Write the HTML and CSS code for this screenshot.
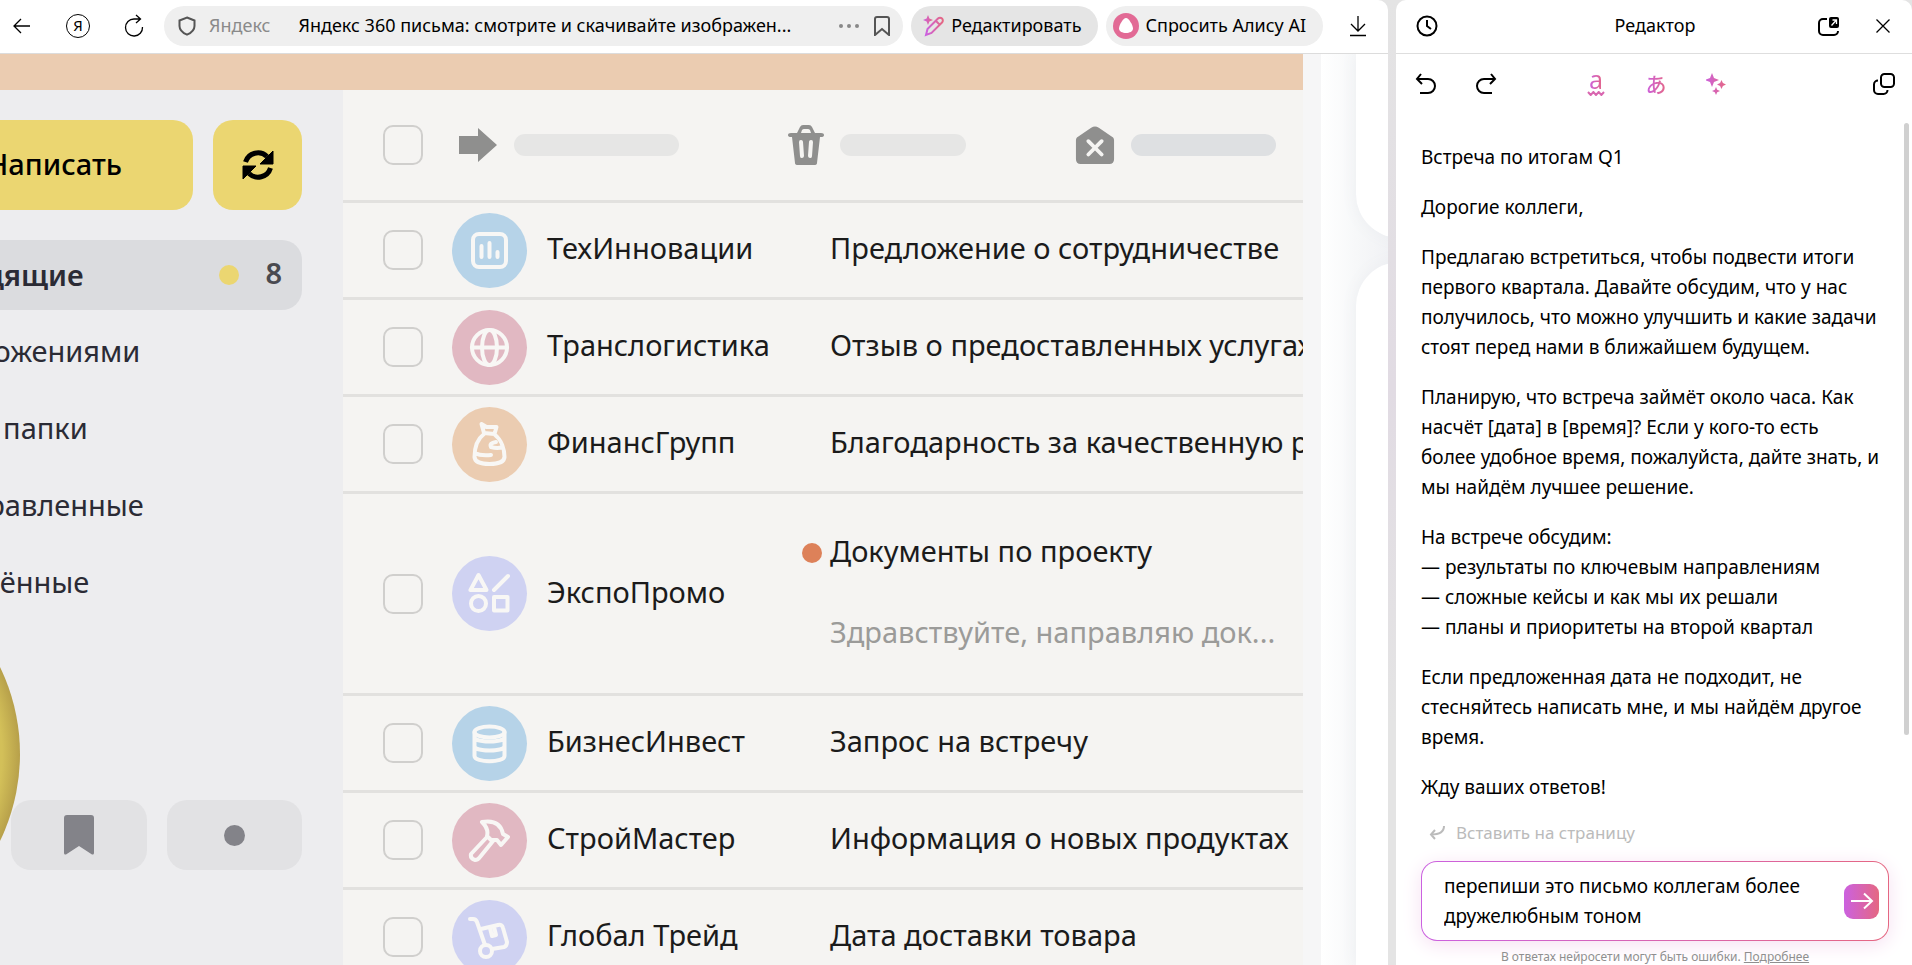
FILE: index.html
```html
<!DOCTYPE html>
<html lang="ru">
<head>
    <meta charset="UTF-8">
    <title>Яндекс 360 письма: смотрите и скачивайте изображения</title>
    <link rel="stylesheet" href="styles.css">
</head>
<body>
    <div class="ventana">
    <header class="barra">
        <button class="icono" aria-label="Назад">
            <svg width="20" height="20" viewBox="0 0 20 20"><path d="M18 10H2M9 3L2 10l7 7"/></svg>
        </button>
        <button class="icono" aria-label="Яндекс">
            <span class="ya">Я</span>
        </button>
        <button class="icono" aria-label="Обновить">
            <svg width="20" height="24" viewBox="0 0 20 24"><path d="M16 5H10A8.500 8.500 0 1 0 18.500 13M12 1l4.500 4L12 9"/></svg>
        </button>
        <div class="direccion">
            <svg class="gris" width="18" height="20" viewBox="0 0 18 20"><path d="M9 1.500L16.500 4.500V10c0 4-3.500 7-7.500 8.700C5 17 1.500 14 1.500 10V4.500z"/></svg>
            <span class="sitio">Яндекс</span>
            <span class="titulo">Яндекс 360 письма: смотрите и скачивайте изображен...</span>
            <button class="puntos" aria-label="Ещё"><i></i><i></i><i></i></button>
            <button class="mini" aria-label="Закладка">
                <svg class="gris" width="18" height="20" viewBox="0 0 18 20"><path d="M2 3a2 2 0 0 1 2-2h10a2 2 0 0 1 2 2v16l-7-6-7 6z"/></svg>
            </button>
        </div>
        <button class="pildora editar">
            <svg width="22" height="22" viewBox="0 0 22 22"><g class="rosa"><path d="M3 20l1.500-6L15 3.500a2.800 2.800 0 0 1 4 4L8.500 18z M13 6l3.500 3.500"/></g><path class="rosaLleno" d="M5 0l1.400 3.600L10 5 6.400 6.400 5 10 3.600 6.400 0 5l3.600-1.400z"/></svg>
            <span>Редактировать</span>
        </button>
        <button class="pildora alisa">
            <svg width="26" height="26" viewBox="0 0 26 26"><circle cx="13" cy="13" r="13" fill="#e26a95" stroke="none"/><path d="M13 5c3 0 7 7.500 7 10.500S16.500 20 13 20s-7-1.500-7-4.500S10 5 13 5z" fill="#fff" stroke="none"/></svg>
            <span>Спросить Алису AI</span>
        </button>
        <button class="icono bajar" aria-label="Загрузки">
            <svg width="18" height="22" viewBox="0 0 18 22"><path d="M9 1v15M2 9l7 7 7-7M1 20.500h16"/></svg>
        </button>
    </header>

    <main class="pagina">
        <div class="correo">
            <div class="franja"></div>
            <nav class="carpetas">
                <div class="arriba">
                    <button class="escribir">Написать</button>
                    <button class="refrescar" aria-label="Проверить почту">
                        <svg width="32" height="32" viewBox="0 0 32 32"><path d="M3.500 13A13 13 0 0 1 25 7.500M28.500 19A13 13 0 0 1 7 24.500" fill="none" stroke="#000" stroke-width="5"/><path d="M31 2v13H18zM1 30V17h13z" fill="#000" stroke="#000" stroke-width="1"/></svg>
                    </button>
                </div>
                <a href="#" class="activa">Входящие <span class="nuevo"></span><b>8</b></a>
                <a href="#">С вложениями</a>
                <a href="#">Мои папки</a>
                <a href="#">Отправленные</a>
                <a href="#">Удалённые</a>
                <div class="abajo">
                    <button aria-label="Закладки">
                        <svg width="30" height="40" viewBox="0 0 30 40"><path d="M0 3a3 3 0 0 1 3-3h24a3 3 0 0 1 3 3v35q0 2-2 1.500L15 31 2 39.500Q0 40 0 38z" fill="#838389" stroke="none"/></svg>
                    </button>
                    <button aria-label="Непрочитанные"><span class="punto"></span></button>
                </div>
                <div class="moneda"></div>
            </nav>

            <section class="lista">
                <div class="acciones">
                    <input type="checkbox" aria-label="Выбрать все">
                    <div class="accion">
                        <svg width="40" height="36" viewBox="0 0 40 36"><path d="M1 9h19V1l19 17-19 17v-8H1z" fill="#8f8f8e" stroke="none"/></svg>
                        <span class="largo"></span>
                    </div>
                    <div class="accion">
                        <svg width="36" height="40" viewBox="0 0 36 40"><path d="M9 8l3-6q1-2 3-2h6q2 0 3 2l3 6h6q3 0 3 2t-3 2h-1l-3 26q0 2-3 2H10q-3 0-3-2L4 12H3q-3 0-3-2t3-2zM13 8h10l-1-3q-1-1-2-1h-4q-1 0-2 1z" fill="#8f8f8e" fill-rule="evenodd" stroke="none"/><path d="M13 17l1 14M23 17l-1 14" stroke="#f5f4f2" stroke-width="4" stroke-linecap="round"/></svg>
                        <span></span>
                    </div>
                    <div class="accion">
                        <svg width="40" height="40" viewBox="0 0 42 40"><path d="M17 2q4-3 8 0l15 10q1 1 1 3v20q0 5-5 5H6q-5 0-5-5V15q0-2 1-3z" fill="#8f8f8e" stroke="none"/><path d="M14 16l14 14M28 16L14 30" stroke="#f5f4f2" stroke-width="4" stroke-linecap="round"/></svg>
                        <span class="oscuro"></span>
                    </div>
                </div>
                <ul>
                    <li>
                        <input type="checkbox" aria-label="ТехИнновации">
                        <span class="avatar azul"><svg width="75" height="75" viewBox="0 0 75 75"><rect x="21" y="21" width="33" height="33" rx="6"/><path d="M29.500 33v11M37.500 30v14M45.500 39v5"/></svg></span>
                        <span class="nombre">ТехИнновации</span>
                        <span class="asunto">Предложение о сотрудничестве</span>
                    </li>
                    <li>
                        <input type="checkbox" aria-label="Транслогистика">
                        <span class="avatar rojo"><svg width="75" height="75" viewBox="0 0 75 75"><circle cx="37.500" cy="37.500" r="17.500"/><ellipse cx="37.500" cy="37.500" rx="7.500" ry="17.500"/><path d="M20 37.500h35"/></svg></span>
                        <span class="nombre">Транслогистика</span>
                        <span class="asunto">Отзыв о предоставленных услугах</span>
                    </li>
                    <li>
                        <input type="checkbox" aria-label="ФинансГрупп">
                        <span class="avatar naranja"><svg width="75" height="75" viewBox="0 0 75 75"><path d="M32 26l-2.500-9 5 3 10 0-2 7zM32 27C24 33 22.500 43 22.500 50Q23 57 37.500 57T52.500 50C52.500 43 50 33 42 27M50 40Q46 42 39 40 37 36 44 35M23 46Q28 49 39 48"/></svg></span>
                        <span class="nombre">ФинансГрупп</span>
                        <span class="asunto">Благодарность за качественную работу</span>
                    </li>
                    <li class="alta">
                        <input type="checkbox" aria-label="ЭкспоПромо">
                        <span class="avatar lila"><svg width="75" height="75" viewBox="0 0 75 75"><path d="M26.500 19L18.500 34h16zM42 34L56 20M42 41h13.500v13.500H42z"/><circle cx="26.500" cy="47.500" r="7.500"/></svg></span>
                        <span class="nombre">ЭкспоПромо</span>
                        <span class="asunto">
                            <span class="conPunto">Документы по проекту</span>
                            <span class="resumen">Здравствуйте, направляю док...</span>
                        </span>
                    </li>
                    <li>
                        <input type="checkbox" aria-label="БизнесИнвест">
                        <span class="avatar azul"><svg width="75" height="75" viewBox="0 0 75 75"><ellipse cx="37.500" cy="26" rx="15" ry="5.500"/><path d="M22.500 26v24c0 7 30 7 30 0V26M22.500 31c0 6 30 6 30 0M22.500 40c0 6 30 6 30 0"/></svg></span>
                        <span class="nombre">БизнесИнвест</span>
                        <span class="asunto">Запрос на встречу</span>
                    </li>
                    <li>
                        <input type="checkbox" aria-label="СтройМастер">
                        <span class="avatar rojo"><svg width="75" height="75" viewBox="0 0 75 75"><path d="M30 19C42 17 49 21 51 31l5 3-7 8-4-5-6 0-4-4Q37 26 30 19zM35 34L19 51q-1 5 4 6 3 0 5-3L41 38"/></svg></span>
                        <span class="nombre">СтройМастер</span>
                        <span class="asunto">Информация о новых продуктах</span>
                    </li>
                    <li>
                        <input type="checkbox" aria-label="Глобал Трейд">
                        <span class="avatar lila"><svg width="75" height="75" viewBox="0 0 75 75"><path d="M18 19h3q3 0 4 3l8 23M29 29l17-4q4-1 5 3l4 14q0 4-3 5l-12 2M38 28l2 8 4-1-2-8"/><circle cx="34" cy="51" r="6"/></svg></span>
                        <span class="nombre">Глобал Трейд</span>
                        <span class="asunto">Дата доставки товара</span>
                    </li>
                </ul>
            </section>
        </div>
        <div class="borde"></div>
        <div class="tarjetas">
            <div class="tarjeta primera"></div>
            <div class="tarjeta segunda"></div>
        </div>
    </main>
    </div>

    <aside class="editor">
        <div class="cabecera">
            <button class="icono" aria-label="История">
                <svg width="22" height="22" viewBox="0 0 22 22"><g stroke-width="2"><circle cx="11" cy="11" r="9.500"/><path d="M11 5v6l4 3"/></g></svg>
            </button>
            <h1>Редактор</h1>
            <button class="icono" aria-label="Открыть в окне">
                <svg width="22" height="20" viewBox="0 0 22 20"><path stroke-width="2" d="M9 3H5a4 4 0 0 0-4 4v8a4 4 0 0 0 4 4h11a4 4 0 0 0 4-4"/><rect x="11" y="1" width="10" height="11" rx="2" fill="#000" stroke="none"/><path stroke="#fff" d="M13.500 9.500L18 4.500M14.500 4h4v4"/></svg>
            </button>
            <button class="icono cerrar" aria-label="Закрыть">
                <svg width="16" height="16" viewBox="0 0 16 16"><path d="M1.500 1.500l13 13M14.500 1.500l-13 13"/></svg>
            </button>
        </div>
        <div class="herramientas">
            <button class="icono" aria-label="Отменить">
                <svg width="22" height="22" viewBox="0 0 22 22"><path stroke-width="2" d="M6 1L2 6l5 5M2 6h11a7 7 0 0 1 0 14H5"/></svg>
            </button>
            <button class="icono" aria-label="Повторить">
                <svg width="22" height="22" viewBox="0 0 22 22"><path stroke-width="2" d="M16 1l4 5-5 5M20 6H9a7 7 0 0 0 0 14h8"/></svg>
            </button>
            <div class="centro">
                <button class="icono columna" aria-label="Исправить ошибки">
                    <span class="letra">a</span>
                    <svg width="18" height="5" viewBox="0 0 18 5"><path stroke="#d967b0" stroke-width="2" d="M1 1l2.700 3 2.700-3L9 4l2.700-3 2.700 3L17 1"/></svg>
                </button>
                <button class="icono" aria-label="Перевести">
                    <span class="letra jp">あ</span>
                </button>
                <button class="icono" aria-label="Улучшить">
                    <svg width="20" height="22" viewBox="0 0 20 22"><path class="rosaLleno" d="M6 0l2 5 5 2-5 2-2 5-2-5-5-2 5-2zM15.500 7l1.400 3.100L20 11.500l-3.100 1.400-1.400 3.100-1.400-3.100-3.100-1.400 3.100-1.400zM10 14l1.200 2.800L14 18l-2.800 1.200L10 22l-1.200-2.800L6 18l2.800-1.200z"/></svg>
                </button>
            </div>
            <button class="icono" aria-label="Копировать">
                <svg width="22" height="22" viewBox="0 0 22 22"><g stroke-width="2"><rect x="8" y="1" width="13" height="13" rx="3.500"/><path d="M5 7.500a4 4 0 0 0-4 4V17a4 4 0 0 0 4 4h5.500a4 4 0 0 0 4-4"/></g></svg>
            </button>
        </div>
        <div class="texto">
            <p>Встреча по итогам Q1</p>
            <p>Дорогие коллеги,</p>
            <p>Предлагаю встретиться, чтобы подвести итоги первого квартала. Давайте обсудим, что у нас получилось, что можно улучшить и какие задачи стоят перед нами в ближайшем будущем.</p>
            <p>Планирую, что встреча займёт около часа. Как насчёт [дата] в [время]? Если у кого-то есть<br>более удобное время, пожалуйста, дайте знать, и мы найдём лучшее решение.</p>
            <p>На встрече обсудим:<br>— результаты по ключевым направлениям<br>— сложные кейсы и как мы их решали<br>— планы и приоритеты на второй квартал</p>
            <p>Если предложенная дата не подходит, не стесняйтесь написать мне, и мы найдём другое время.</p>
            <p>Жду ваших ответов!</p>
            <span class="scroll"></span>
        </div>
        <button class="insertar" disabled>
            <svg width="16" height="16" viewBox="0 0 16 16"><path stroke="#bbb" stroke-width="2" d="M15 1c0 6-4 8.500-13 8.500M6 5L2 9.500 6 14"/></svg>
            Вставить на страницу
        </button>
        <form class="pedido">
            <textarea rows="2" aria-label="Запрос">перепиши это письмо коллегам более дружелюбным тоном</textarea>
            <button type="button" aria-label="Отправить">
                <svg width="24" height="18" viewBox="0 0 24 18"><path stroke="#fff" stroke-width="2" d="M1 9h21M14 1.500L22 9l-8 7.500"/></svg>
            </button>
        </form>
        <p class="aviso">В ответах нейросети могут быть ошибки. <a href="#">Подробнее</a></p>
    </aside>

    <svg width="0" height="0" class="defs"><defs><linearGradient id="rosa"><stop offset="0" stop-color="#cb61e0"/><stop offset="1" stop-color="#e56782"/></linearGradient></defs></svg>
</body>
</html>
```
FILE: styles.css
```css
* {
    box-sizing: border-box;
}

body {
    margin: 0;
    height: 100vh;
    overflow: hidden;
    display: grid;
    grid-template-columns: 1fr 516px;
    gap: 8px;
    background: linear-gradient(#e4e4e4, #e1dbe3 40%, #e4e4e4 75%);
    font-family: "Noto Sans", "Noto Sans CJK JP", sans-serif;
    color: #000;
}

button {
    border: none;
    background: none;
    padding: 0;
    font-family: inherit;
    color: inherit;
    cursor: pointer;
}

svg {
    fill: none;
    stroke: #000;
    stroke-width: 1.3;
    flex-shrink: 0;
}

p, h1, ul {
    margin: 0;
    padding: 0;
}

.defs {
    position: absolute;
}

.rosa {
    stroke: url(#rosa);
    stroke-width: 2;
}

.rosaLleno {
    fill: url(#rosa);
    stroke: none;
}

.gris {
    stroke: #555;
    stroke-width: 2;
}

.icono {
    width: 32px;
    height: 32px;
    display: flex;
    align-items: center;
    justify-content: center;
    flex-shrink: 0;
}

/* ventana del navegador */
.ventana {
    min-width: 0;
    display: flex;
    flex-direction: column;
    background: #fff;
    border-radius: 0 10px 0 0;
    overflow: hidden;
    height: 100vh;
}

.barra {
    display: flex;
    align-items: center;
    height: 54px;
    padding: 0 14px 1px 6px;
    flex-shrink: 0;
    border-bottom: 1px solid #dcdcdc;
}

.barra > .icono {
    margin-right: 24px;
}

.barra > .icono + .direccion {
    margin-left: -10px;
}

.ya {
    width: 24px;
    height: 24px;
    border: 1px solid #000;
    border-radius: 50%;
    font-size: 15px;
    line-height: 21px;
}

.direccion {
    flex: 1;
    min-width: 0;
    height: 40px;
    border-radius: 20px;
    background: #efefef;
    display: flex;
    align-items: center;
    padding: 0 12px 0 14px;
    font-size: 18px;
    white-space: nowrap;
}

.sitio {
    color: #8a8a8a;
    margin: 0 28px 0 13px;
    padding-bottom: 2px;
}

.titulo {
    flex: 1;
    overflow: hidden;
    padding-bottom: 2px;
}

.puntos {
    display: flex;
    gap: 4px;
    margin-right: 14px;
}

.puntos i {
    width: 4px;
    height: 4px;
    border-radius: 50%;
    background: #888;
}

.mini {
    display: flex;
}

.pildora {
    height: 40px;
    border-radius: 20px;
    margin-left: 8px;
    background: #efefef;
    display: flex;
    align-items: center;
    gap: 6px;
    font-size: 18px;
    white-space: nowrap;
}

.pildora span {
    padding-bottom: 2px;
}

.editar {
    background: #e5e5e5;
    padding: 0 17px 0 12px;
}

.alisa {
    padding: 0 17px 0 7px;
}

.barra > .bajar {
    margin: 0 0 0 19px;
}

/* correo */
.pagina {
    flex: 1;
    min-height: 0;
    display: grid;
    grid-template-columns: 1fr 18px 67px;
}

.correo {
    min-width: 0;
    min-height: 0;
    overflow: hidden;
    display: grid;
    grid-template-columns: 343px 1fr;
    grid-template-rows: 36px 1fr;
    background: #f5f4f2;
}

.franja {
    grid-column: 1 / 3;
    background: #ebccb1;
}

.carpetas {
    position: relative;
    overflow: hidden;
    min-height: 0;
    background: #ededef;
    padding: 30px 41px 0 0;
    display: flex;
    flex-direction: column;
}

.arriba {
    display: flex;
    gap: 20px;
    margin: 0 0 30px -61px;
}

.escribir {
    flex: 1;
    height: 90px;
    border-radius: 20px;
    background: #ebd671;
    font-size: 29px;
    font-weight: 500;
    text-align: right;
    padding: 0 71px 4px 0;
}

.refrescar {
    width: 89px;
    height: 90px;
    border-radius: 20px;
    background: #ebd671;
    display: flex;
    align-items: center;
    justify-content: center;
    flex-shrink: 0;
}

.carpetas a {
    height: 77px;
    line-height: 73px;
    margin-left: -66px;
    font-size: 29px;
    color: #2b2b35;
    text-decoration: none;
    white-space: nowrap;
}

.carpetas .activa {
    display: flex;
    align-items: center;
    height: 70px;
    line-height: 66px;
    margin: 0 0 4px -86px;
    padding: 0 20px;
    border-radius: 20px;
    background: #dbdcdf;
    font-weight: 600;
}

.nuevo {
    width: 20px;
    height: 20px;
    border-radius: 50%;
    background: #ebd671;
    margin: 0 26px 0 auto;
}

.activa b {
    height: 70px;
    font-weight: 600;
    color: #4a4a50;
}

.abajo {
    display: flex;
    gap: 20px;
    margin: 178px 0 0 11px;
}

.abajo button {
    flex: 1;
    height: 70px;
    border-radius: 20px;
    background: #e2e2e4;
    display: flex;
    align-items: center;
    justify-content: center;
}

.punto {
    width: 21px;
    height: 21px;
    border-radius: 50%;
    background: #838389;
}

.moneda {
    position: absolute;
    left: -378px;
    top: 465px;
    width: 398px;
    height: 398px;
    border-radius: 50%;
    background: radial-gradient(closest-side, #d3c059 91%, #b7a04a 100%);
}

.lista {
    min-width: 0;
    min-height: 0;
    overflow: hidden;
}

.lista input {
    appearance: none;
    width: 40px;
    height: 40px;
    margin: 0;
    border: 2px solid #d0cfcd;
    border-radius: 10px;
    flex-shrink: 0;
}

.acciones {
    display: flex;
    align-items: center;
    height: 110px;
    padding-left: 40px;
}

.accion {
    display: flex;
    align-items: center;
    gap: 16px;
    margin-left: 35px;
}

.accion + .accion {
    margin-left: 109px;
}

.accion span {
    width: 126px;
    height: 22px;
    border-radius: 11px;
    background: #e6e6e5;
}

.accion .largo {
    width: 165px;
}

.accion .oscuro {
    width: 145px;
    background: #dee0e2;
}

.lista li {
    display: flex;
    align-items: center;
    height: 97px;
    padding-left: 40px;
    border-top: 3px solid #e2e1df;
    font-size: 29px;
    line-height: 40px;
    color: #1b1b1b;
    white-space: nowrap;
}

.lista li.alta {
    height: 202px;
}

.avatar {
    width: 75px;
    height: 75px;
    border-radius: 50%;
    margin: 0 20px 0 29px;
    flex-shrink: 0;
}

.avatar svg {
    display: block;
    stroke: #f8f7f5;
    stroke-width: 4;
    stroke-linecap: round;
    stroke-linejoin: round;
}

.azul {
    background: #b6d3e8;
}

.rojo {
    background: #e1b8c2;
}

.naranja {
    background: #ebccb1;
}

.lila {
    background: #cfd2f2;
}

.nombre {
    width: 283px;
    padding-bottom: 4px;
    flex-shrink: 0;
}

.asunto {
    display: flex;
    flex-direction: column;
    gap: 41px;
    padding-bottom: 4px;
}

.conPunto {
    position: relative;
}

.conPunto::before {
    content: "";
    position: absolute;
    left: -28px;
    top: 12px;
    width: 20px;
    height: 20px;
    border-radius: 50%;
    background: #dd8159;
}

.resumen {
    color: #9b9b99;
}

.borde {
    background: #f6f6f7;
}

.tarjetas {
    overflow: hidden;
    padding-left: 35px;
    display: flex;
    flex-direction: column;
    gap: 24px;
    background: linear-gradient(90deg, #fff, #f7f8f9 35px, #f1f2f5);
}

.tarjeta {
    width: 300px;
    background: #fff;
    box-shadow: 0 0 16px #eceef1;
}

.primera {
    height: 184px;
    border-radius: 0 0 0 44px;
}

.segunda {
    flex: 1;
    border-radius: 44px 0 0 0;
}

/* panel del editor */
.editor {
    background: #fff;
    border-radius: 10px 10px 0 0;
    height: 100vh;
    overflow: hidden;
    display: flex;
    flex-direction: column;
}

.cabecera {
    display: flex;
    align-items: center;
    height: 54px;
    padding: 0 13px 1px 15px;
    border-bottom: 1px solid #dedede;
    flex-shrink: 0;
}

.cabecera h1 {
    flex: 1;
    padding: 0 0 2px 54px;
    font-size: 18px;
    line-height: 24px;
    font-weight: 400;
    text-align: center;
}

.cerrar {
    margin-left: 22px;
}

.herramientas {
    display: flex;
    align-items: center;
    gap: 28px;
    padding: 14px 12px 15px 14px;
    flex-shrink: 0;
}

.centro {
    flex: 1;
    display: flex;
    justify-content: center;
    gap: 28px;
    padding-right: 58px;
}

.columna {
    flex-direction: column;
}

.letra {
    font-size: 25px;
    line-height: 20px;
    color: transparent;
    background: linear-gradient(90deg, #cb61e0, #e56782);
    background-clip: text;
}

.columna .letra {
    height: 18px;
    line-height: 12px;
}

.jp {
    font-size: 21px;
    line-height: 24px;
    font-weight: 500;
}

.texto {
    position: relative;
    flex: 1;
    padding: 27px 24px 0 25px;
    font-size: 19px;
    line-height: 30px;
}

.texto p {
    margin-bottom: 20px;
}

.texto p:last-of-type {
    margin-bottom: 0;
}

.scroll {
    position: absolute;
    top: 8px;
    right: 3px;
    width: 5px;
    height: 612px;
    border-radius: 3px;
    background: #d0d0d0;
}

.insertar {
    display: flex;
    align-items: center;
    gap: 11px;
    margin: 0 0 16px 33px;
    font-size: 17px;
    line-height: 24px;
    color: #bbb;
}

.pedido {
    display: flex;
    align-items: center;
    flex-shrink: 0;
    height: 80px;
    margin: 0 23px 0 25px;
    padding: 0 9px 0 22px;
    border: 1px solid transparent;
    border-radius: 16px;
    background: linear-gradient(#fff, #fff) padding-box, linear-gradient(90deg, #cb61e0, #e56782) border-box;
    box-shadow: 0 4px 20px #f6e0f2;
}

.pedido textarea {
    flex: 1;
    height: 60px;
    padding: 0;
    border: none;
    outline: none;
    resize: none;
    overflow: hidden;
    background: none;
    font-family: inherit;
    font-size: 19px;
    line-height: 30px;
}

.pedido button {
    display: flex;
    align-items: center;
    justify-content: center;
    width: 35px;
    height: 35px;
    margin-left: 16px;
    border-radius: 9px;
    background: linear-gradient(90deg, #cb61e0, #e56782);
}

.aviso {
    text-align: center;
    padding: 8px 0 0 2px;
    font-size: 12px;
    line-height: 16px;
    color: #8f8f8f;
}

.aviso a {
    color: inherit;
}
```
